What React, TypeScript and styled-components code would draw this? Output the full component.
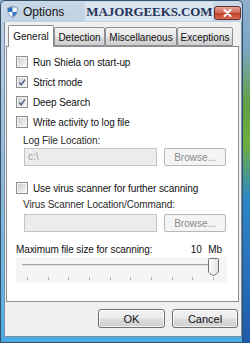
import * as React from 'react'
import styled, { createGlobalStyle } from 'styled-components'

const Global = createGlobalStyle`
  html, body {
    margin: 0;
    padding: 0;
  }
  body {
    width: 250px;
    height: 343px;
    overflow: hidden;
    font-family: 'Liberation Sans', Arial, sans-serif;
    background: linear-gradient(to bottom, #8fb0cc 0%, #7aa6c6 14%, #5f9f45 30%, #6fae3e 42%, #2d86c4 58%, #2a6fb8 80%, #1e5aa6 100%);
  }
`

const Window = styled.div`
  width: 243px;
  height: 343px;
  box-sizing: border-box;
  border: 1px solid #34506b;
  border-radius: 5px 5px 0 0;
  background: linear-gradient(to bottom, #c9d8e7 0%, #bccfe2 8%, #8cb7d6 55%, #5bb3e4 90%, #4aa9df 100%);
  display: flex;
  flex-direction: column;
`

const TitleBar = styled.div`
  height: 21px;
  display: flex;
  align-items: center;
  padding-left: 6px;
`

const Title = styled.span`
  margin-left: 5px;
  font-size: 12px;
  color: #111;
`

const Watermark = styled.span`
  margin-left: 21px;
  height: 19px;
  line-height: 19px;
  padding: 0 1px;
  background: rgba(235, 242, 248, 0.55);
  font-family: 'Liberation Serif', 'Times New Roman', serif;
  font-weight: bold;
  font-size: 13px;
  color: #26335a;
  letter-spacing: -0.1px;
`

const CloseButton = styled.div`
  margin-left: 1px;
  margin-top: 2px;
  width: 27px;
  height: 14px;
  box-sizing: border-box;
  border: 1px solid #6b2b26;
  border-radius: 3px;
  background: linear-gradient(to bottom, #e8a597 0%, #d46b5a 45%, #c2402c 55%, #d66c55 100%);
  display: flex;
  align-items: center;
  justify-content: center;
`

const Client = styled.div`
  margin-left: 3px;
  width: 238px;
  height: 315px;
  box-sizing: border-box;
  border: 1px solid #7890a8;
  border-top: none;
  background: #f0f0f0;
  padding: 3px 0 0 1px;
  display: flex;
  flex-direction: column;
`

const TabRow = styled.div`
  display: flex;
  align-items: flex-end;
  height: 21px;
  padding-left: 2px;
  position: relative;
  z-index: 1;
`

const Tab = styled.div<{ $w: number; $active?: boolean }>`
  width: ${p => p.$w}px;
  height: ${p => (p.$active ? 22 : 19)}px;
  margin-bottom: ${p => (p.$active ? -1 : 0)}px;
  box-sizing: border-box;
  border: 1px solid #8c8e94;
  border-bottom: ${p => (p.$active ? 'none' : '1px solid #8c8e94')};
  border-radius: 2px 2px 0 0;
  background: ${p => (p.$active ? '#ffffff' : 'linear-gradient(to bottom, #f2f2f2 0%, #ebebeb 50%, #dddddd 51%, #cfcfcf 100%)')};
  font-size: 10px;
  color: #111;
  display: flex;
  align-items: center;
  justify-content: center;
  padding-top: ${p => (p.$active ? 0 : 1)}px;
`

const Panel = styled.div`
  width: 233px;
  height: 256px;
  box-sizing: border-box;
  border: 1px solid #8c8e94;
  background: #ffffff;
  padding: 5px 0 0 9px;
  display: flex;
  flex-direction: column;
  font-size: 10px;
  color: #111;
`

const CheckRow = styled.div<{ $mt?: number }>`
  height: 20px;
  margin-top: ${p => p.$mt ?? 0}px;
  display: flex;
  align-items: center;
  gap: 5px;
  letter-spacing: -0.1px;
`

const Box = styled.span`
  width: 12px;
  height: 12px;
  box-sizing: border-box;
  border: 1px solid #8f8f8f;
  background: #f4f4f4;
  padding: 1px;
  display: flex;
  align-items: center;
  justify-content: center;
`

const BoxInner = styled.span`
  width: 8px;
  height: 8px;
  background: linear-gradient(135deg, #cfcfcf 0%, #e6e6e6 60%, #f6f6f6 100%);
  display: flex;
  align-items: center;
  justify-content: center;
`

const SubLabel = styled.div<{ $mt: number }>`
  margin-top: ${p => p.$mt}px;
  margin-left: 7px;
  height: 12px;
  line-height: 12px;
  color: #2a2a2a;
  letter-spacing: -0.1px;
`

const FieldRow = styled.div<{ $mt: number }>`
  margin-top: ${p => p.$mt}px;
  padding-left: 8px;
  display: flex;
  gap: 7px;
  height: 18px;
`

const TextField = styled.div`
  width: 133px;
  height: 18px;
  box-sizing: border-box;
  border: 1px solid #c4c4c4;
  background: #ececec;
  color: #a2a2a2;
  padding-left: 3px;
  line-height: 16px;
`

const BrowseButton = styled.div`
  width: 62px;
  height: 18px;
  box-sizing: border-box;
  border: 1px solid #b6b9bc;
  border-radius: 2px;
  background: #f4f4f4;
  color: #8a8a8a;
  display: flex;
  align-items: center;
  justify-content: center;
`

const SizeRow = styled.div`
  margin-top: 12px;
  width: 206px;
  height: 12px;
  line-height: 12px;
  display: flex;
  justify-content: space-between;
  letter-spacing: -0.1px;
`

const SizeValue = styled.span`
  word-spacing: 4px;
`

const Slider = styled.div`
  margin-top: 1px;
  width: 211px;
  height: 26px;
  background: #f5f5f5;
  position: relative;
`

const Track = styled.div`
  position: absolute;
  left: 6px;
  top: 7px;
  width: 193px;
  height: 1px;
  background: #a9a9a9;
  border-bottom: 1px solid #e0e0e0;
`

const Ticks = styled.div`
  position: absolute;
  left: 11px;
  top: 20px;
  width: 187px;
  display: flex;
  justify-content: space-between;
`

const Tick = styled.span`
  width: 1px;
  height: 3px;
  background: #b4b4b4;
`

const Thumb = styled.svg`
  position: absolute;
  left: 192px;
  top: 1px;
`

const ButtonRow = styled.div`
  margin-top: 7px;
  width: 232px;
  display: flex;
  justify-content: flex-end;
  gap: 7px;
`

const DialogButton = styled.div<{ $w: number }>`
  width: ${p => p.$w}px;
  height: 19px;
  box-sizing: border-box;
  border: 1px solid #707070;
  border-radius: 3px;
  background: linear-gradient(to bottom, #f3f3f3 0%, #ebebeb 48%, #dddddd 52%, #cfcfcf 100%);
  box-shadow: inset 0 0 0 1px rgba(255, 255, 255, 0.7);
  font-size: 11px;
  color: #111;
  display: flex;
  align-items: center;
  justify-content: center;
`

function Check({ checked, label, mt }: { checked?: boolean; label: string; mt?: number }) {
  return (
    <CheckRow $mt={mt}>
      <Box>
        <BoxInner>
          {checked && (
            <svg width="9" height="9" viewBox="0 0 9 9">
              <path d="M1.5 4.5 L3.6 7 L7.8 1.2" fill="none" stroke="#4b5f86" strokeWidth="1.6" />
            </svg>
          )}
        </BoxInner>
      </Box>
      <span>{label}</span>
    </CheckRow>
  )
}

const tabs = [
  { name: 'General', w: 46, active: true },
  { name: 'Detection', w: 51 },
  { name: 'Miscellaneous', w: 72 },
  { name: 'Exceptions', w: 56 },
]

export default function App() {
  return (
    <>
      <Global />
      <Window>
        <TitleBar>
          <svg width="11" height="12" viewBox="0 0 11 12">
            <path d="M5.5 0.5 L10.5 2 L10 7 Q8.5 10.5 5.5 11.5 Q2.5 10.5 1 7 L0.5 2 Z" fill="#f4f7fa" stroke="#7b8ea3" strokeWidth="0.8" />
            <path d="M5.5 0.8 L0.8 2.2 L1.1 6 L5.5 6 Z" fill="#2d6fbd" />
            <path d="M5.5 6 L10 6 Q8.6 10 5.5 11.2 Z" fill="#2d6fbd" />
          </svg>
          <Title>Options</Title>
          <Watermark>MAJORGEEKS.COM</Watermark>
          <CloseButton>
            <svg width="9" height="8" viewBox="0 0 9 8">
              <path d="M1.5 1 L7.5 7 M7.5 1 L1.5 7" stroke="#ffffff" strokeWidth="2" strokeLinecap="round" />
            </svg>
          </CloseButton>
        </TitleBar>
        <Client>
          <TabRow>
            {tabs.map(t => (
              <Tab key={t.name} $w={t.w} $active={t.active}>
                {t.name}
              </Tab>
            ))}
          </TabRow>
          <Panel>
            <Check label="Run Shiela on start-up" />
            <Check label="Strict mode" checked />
            <Check label="Deep Search" checked />
            <Check label="Write activity to log file" />
            <SubLabel $mt={3}>Log File Location:</SubLabel>
            <FieldRow $mt={1}>
              <TextField>c:\</TextField>
              <BrowseButton>Browse...</BrowseButton>
            </FieldRow>
            <Check label="Use virus scanner for further scanning" mt={12} />
            <SubLabel $mt={1}>Virus Scanner Location/Command:</SubLabel>
            <FieldRow $mt={3}>
              <TextField />
              <BrowseButton>Browse...</BrowseButton>
            </FieldRow>
            <SizeRow>
              <span>Maximum file size for scanning:</span>
              <SizeValue>10 Mb</SizeValue>
            </SizeRow>
            <Slider>
              <Track />
              <Ticks>
                {Array.from({ length: 10 }, (_, i) => (
                  <Tick key={i} />
                ))}
              </Ticks>
              <Thumb width="11" height="18" viewBox="0 0 11 18">
                <defs>
                  <linearGradient id="thumbFill" x1="0" y1="0" x2="1" y2="0">
                    <stop offset="0" stopColor="#fdfdfd" />
                    <stop offset="1" stopColor="#e2e2e2" />
                  </linearGradient>
                </defs>
                <path d="M1.5 0.5 H9.5 Q10.5 0.5 10.5 1.5 V13 Q10.5 14.5 9 15.5 L6.2 17.3 Q5.5 17.7 4.8 17.3 L2 15.5 Q0.5 14.5 0.5 13 V1.5 Q0.5 0.5 1.5 0.5 Z" fill="url(#thumbFill)" stroke="#6f6f6f" strokeWidth="1" />
              </Thumb>
            </Slider>
          </Panel>
          <ButtonRow>
            <DialogButton $w={67}>OK</DialogButton>
            <DialogButton $w={66}>Cancel</DialogButton>
          </ButtonRow>
        </Client>
      </Window>
    </>
  )
}
